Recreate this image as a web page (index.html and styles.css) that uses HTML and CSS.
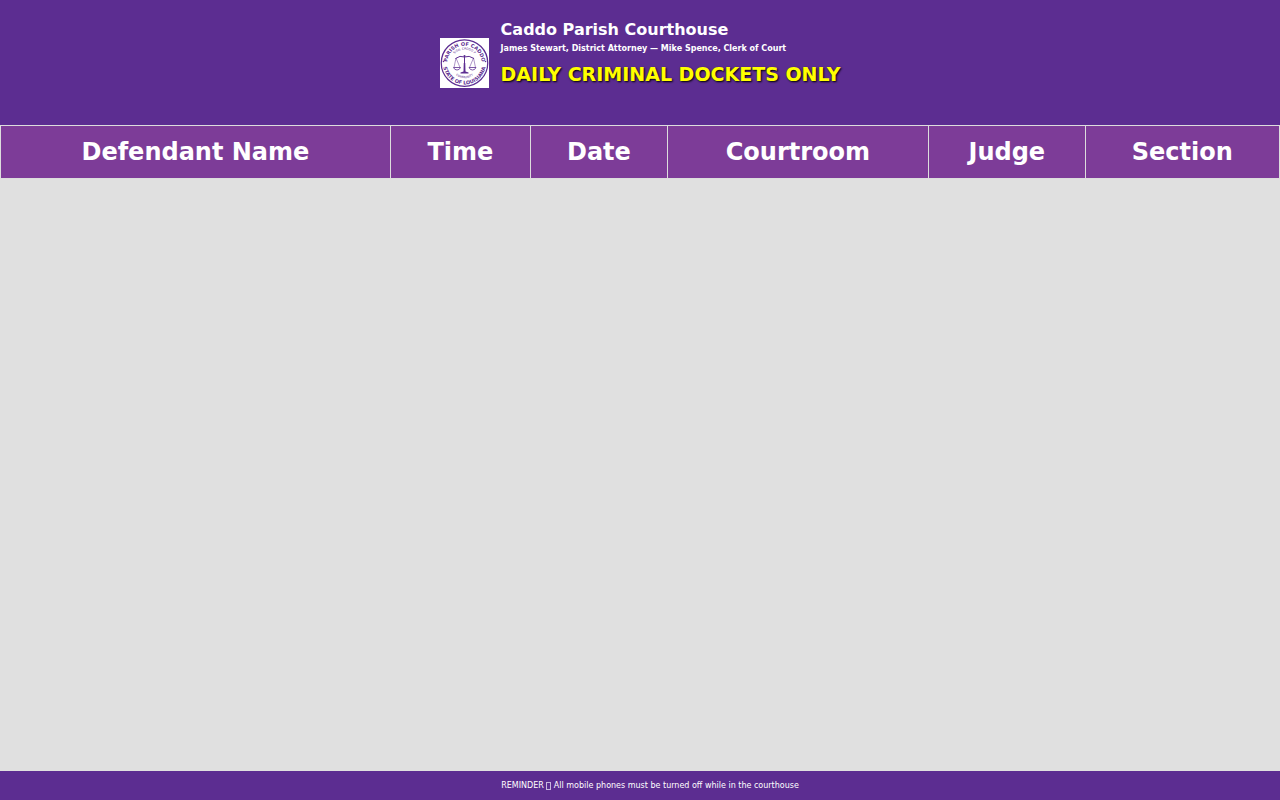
FILE: index.html
```html
<!DOCTYPE html>
<html lang="en">
<head>
    <meta charset="UTF-8">
    <meta name="viewport" content="width=device-width, initial-scale=1.0">
    <title>Caddo Parish Criminal Dockets</title>
    <link rel="stylesheet" href="styles.css">
</head>
<body>
    <header class="header">
        <svg class="logo" viewBox="0 0 98 100" role="img" aria-label="Parish of Caddo seal">
            <defs>
                <path id="arc-top" d="M 15 56 A 34.5 34.5 0 1 1 83 56" />
                <path id="arc-bottom" d="M 6 50 A 43 43 0 0 0 92 50" />
                <path id="arc-inner" d="M 22 50 A 27 27 0 0 1 76 50" />
                <path id="arc-motto" d="M 20 58 A 30 30 0 0 0 78 58" />
            </defs>
            <rect width="98" height="100" fill="#fff" />
            <g fill="none" stroke="#5c2d91">
                <circle cx="49" cy="50" r="46.5" stroke-width="2.5" />
                <path d="M49 36 V69 M31 41 Q40 34 49 38 Q58 34 68 41" stroke-width="2" />
                <path d="M32 40 L28 59 M32 40 L40 59 M67 40 L59 59 M67 40 L71 59" stroke-width="1" />
                <path d="M27 59 H41 Q39 64 34 64 Q29 64 27 59 Z M58 59 H72 Q70 64 65 64 Q60 64 58 59 Z" stroke-width="1.6" />
            </g>
            <g fill="#5c2d91">
                <circle cx="49" cy="36" r="2" />
                <path d="M47.5 50 H50.5 L51 67 L57 69 V71 H41 V69 L47 67 Z" />
                <circle cx="7" cy="47" r="1.6" />
                <circle cx="91" cy="47" r="1.6" />
            </g>
            <g class="seal-text">
                <text><textPath href="#arc-top" startOffset="50%">PARISH OF CADDO</textPath></text>
                <text><textPath href="#arc-bottom" startOffset="50%">STATE OF LOUISIANA</textPath></text>
            </g>
            <g class="seal-small">
                <text><textPath href="#arc-inner" startOffset="50%">SIGIL CADDO P</textPath></text>
                <text><textPath href="#arc-motto" startOffset="50%">COMMUNITY</textPath></text>
            </g>
        </svg>
        <div class="header-text">
            <h1>Caddo Parish Courthouse</h1>
            <p class="officials">James Stewart, District Attorney — Mike Spence, Clerk of Court</p>
            <p class="notice">DAILY CRIMINAL DOCKETS ONLY</p>
        </div>
    </header>

    <main class="docket">
        <table>
            <thead>
                <tr>
                    <th>Defendant Name</th>
                    <th>Time</th>
                    <th>Date</th>
                    <th>Courtroom</th>
                    <th>Judge</th>
                    <th>Section</th>
                </tr>
            </thead>
            <tbody></tbody>
        </table>
    </main>

    <footer class="footer">REMINDER <span class="box"></span> All mobile phones must be turned off while in the courthouse</footer>
</body>
</html>
```
FILE: styles.css
```css
* {
    box-sizing: border-box;
}

body {
    font-family: "DejaVu Sans", Verdana, sans-serif;
    background-color: #e0e0e0;
    margin: 0;
    min-height: 100vh;
    display: flex;
    flex-direction: column;
}

.header {
    background-color: #5c2d91;
    color: #fff;
    display: flex;
    justify-content: center;
    align-items: center;
    gap: 12px;
    padding: 20px 20px 36px;
}

.logo {
    width: 49px;
    height: 50px;
    margin-top: 16px;
}

.seal-text {
    font-size: 10px;
    font-weight: bold;
    fill: #5c2d91;
    text-anchor: middle;
}

.seal-small {
    font-size: 6px;
    fill: #5c2d91;
    text-anchor: middle;
}

.header-text {
    font-weight: bold;
}

.header h1 {
    font-size: 16px;
    line-height: 19px;
    margin: 0 0 5px;
}

.officials {
    font-size: 8px;
    line-height: 10px;
    margin: 0 0 9px;
}

.notice {
    color: #ff0;
    font-size: 19px;
    line-height: 23px;
    margin: 0 0 3px;
    text-shadow: 1px 1px 2px #000;
}

.docket {
    flex: 1;
}

table {
    width: 100%;
    border-collapse: collapse;
}

th {
    background-color: #7d3c98;
    color: #fff;
    border: 1px solid #ddd;
    padding: 12px;
    font-size: 24px;
    text-align: center;
}

.footer {
    background-color: #5c2d91;
    color: #fff;
    font-size: 8px;
    line-height: 9px;
    padding: 10px 0;
    padding-left: 20px;
    text-align: center;
}

.box {
    display: inline-block;
    width: 5px;
    height: 8px;
    border: 1px solid #c9b6de;
    vertical-align: text-bottom;
}
```
